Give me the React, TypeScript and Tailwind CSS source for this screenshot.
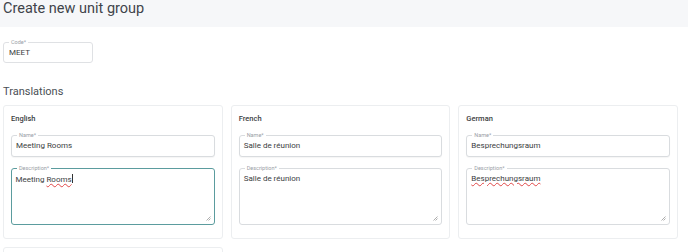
import React from "react";

const wavy = "underline decoration-wavy decoration-[#e04848] decoration-[0.6px] underline-offset-[1px]";

function Field({ label, value }: { label: string; value: string }) {
  return (
    <div className="relative h-[22px] rounded-[3px] border border-[#d9dcdf] bg-white pl-[4px] flex items-center text-[8px] text-[#3b3e42] shadow-[0_1px_1px_rgba(0,0,0,0.04)]">
      <span className="absolute -top-[4px] left-[5px] bg-white px-[2px] text-[5.5px] leading-[6px] text-[#9aa0a6]">{label}</span>
      <span>{value}</span>
    </div>
  );
}

function Area({ value, focused, underlineWord, underlineAll, caret }: { value: string; focused?: boolean; underlineWord?: string; underlineAll?: boolean; caret?: boolean }) {
  let content: React.ReactNode = value;
  if (underlineAll) content = <span className={wavy}>{value}</span>;
  else if (underlineWord) {
    const i = value.indexOf(underlineWord);
    content = (
      <>
        {value.slice(0, i)}
        <span className={wavy}>{underlineWord}</span>
        {value.slice(i + underlineWord.length)}
      </>
    );
  }
  return (
    <div
      className={`relative mt-[11px] h-[57px] rounded-[3px] bg-white pt-[5px] text-[8px] leading-[10px] text-[#3b3e42] ${
        focused ? "border-[1.5px] border-[#5b9c9e] pl-[3.5px]" : "border border-[#d9dcdf] pl-[4px]"
      }`}
    >
      <span className="absolute -top-[4px] left-[5px] bg-white px-[2px] text-[5.5px] leading-[6px] text-[#9aa0a6]">Description*</span>
      <span>{content}</span>
      {caret && <span className="inline-block w-[1px] h-[9px] bg-[#333] align-[-1px]" />}
      <svg className="absolute right-[3px] bottom-[3px]" width="5" height="5" viewBox="0 0 5 5">
        <path d="M4.5 0.5 L0.5 4.5 M4.5 2.5 L2.5 4.5" stroke="#9a9a9a" strokeWidth="0.8" />
      </svg>
    </div>
  );
}

function Card({ title, name, desc, focused, underlineWord, underlineAll, caret }: any) {
  return (
    <div className="h-[134px] rounded-[3px] border border-[#eceef0] bg-white px-[7px] pt-[8px]">
      <div className="text-[7.5px] leading-[10px] font-medium text-[#3b3e42]">{title}</div>
      <div className="mt-[11px]">
        <Field label="Name*" value={name} />
      </div>
      <Area value={desc} focused={focused} underlineWord={underlineWord} underlineAll={underlineAll} caret={caret} />
    </div>
  );
}

export default function App() {
  return (
    <div className="w-[688px] h-[252px] overflow-hidden bg-white" style={{ fontFamily: "Roboto, 'Noto Sans', sans-serif" }}>
      <div className="h-[27px] bg-[#f6f7f9] pl-[3px]">
        <h1 className="text-[14.5px] leading-[17px] font-normal text-[#3f444a]">Create new unit group</h1>
      </div>
      <div className="pl-[3px] mt-[15px]">
        <div className="w-[90px] h-[21px]">
          <div className="relative h-[21px] rounded-[3px] border border-[#dfe1e4] bg-white pl-[5px] flex items-center text-[8px] text-[#3b3e42]">
            <span className="absolute -top-[4px] left-[5px] bg-white px-[2px] text-[5.5px] leading-[6px] text-[#9aa0a6]">Code*</span>
            MEET
          </div>
        </div>
      </div>
      <h2 className="pl-[3px] mt-[22px] text-[11px] leading-[13px] text-[#4a4f55]">Translations</h2>
      <div className="mt-[7px] pl-[3px] pr-[10px] grid grid-cols-3 gap-[8px]">
        <Card title="English" name="Meeting Rooms" desc="Meeting Rooms" focused underlineWord="Rooms" caret />
        <Card title="French" name="Salle de réunion" desc="Salle de réunion" />
        <Card title="German" name="Besprechungsraum" desc="Besprechungsraum" underlineAll />
        <div className="h-[40px] rounded-[3px] border border-[#eceef0] bg-white" />
      </div>
    </div>
  );
}
